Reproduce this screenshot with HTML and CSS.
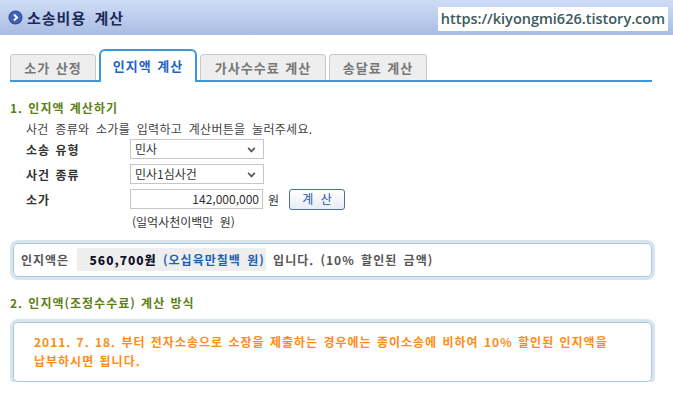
FILE: index.html
```html
<!DOCTYPE html>
<html lang="ko">
<head>
    <meta charset="UTF-8">
    <title>소송비용 계산</title>
    <link rel="stylesheet" href="styles.css">
</head>
<body>
    <!-- 상단 타이틀 -->
    <div class="top-bar">
        <h1 class="top-title">
            <svg class="top-icon" width="15" height="15" viewBox="0 0 15 15">
                <circle cx="7.5" cy="7.5" r="7" fill="#2a4a9a"/>
                <circle cx="7.5" cy="7.5" r="6" fill="#3f63b8"/>
                <path d="M6 4.5 L9 7.5 L6 10.5" stroke="#fff" stroke-width="2" fill="none"/>
            </svg>
            소송비용 계산
        </h1>
        <div class="site-url">https://kiyongmi626.tistory.com</div>
    </div>

    <div class="content">
        <!-- 탭 -->
        <ul class="tabs">
            <li class="tab">소가 산정</li>
            <li class="tab active">인지액 계산</li>
            <li class="tab">가사수수료 계산</li>
            <li class="tab">송달료 계산</li>
        </ul>

        <h2 class="sec-title">1. 인지액 계산하기</h2>
        <p class="desc">사건 종류와 소가를 입력하고 계산버튼을 눌러주세요.</p>
        <div class="form">
            <div class="row">
                <label class="lbl">소송 유형</label>
                <div class="sel">민사<span class="arrow"></span></div>
            </div>
            <div class="row">
                <label class="lbl">사건 종류</label>
                <div class="sel">민사1심사건<span class="arrow"></span></div>
            </div>
            <div class="row">
                <label class="lbl">소가</label>
                <div class="num">142,000,000</div>
                <span class="unit">원</span>
                <button class="btn">계 산</button>
            </div>
            <div class="hangul">(일억사천이백만 원)</div>
        </div>

        <div class="box result">
            인지액은
            <span class="amount"><b class="won">560,700원</b> <span class="kor">(오십육만칠백 원)</span></span>
            입니다. (10% 할인된 금액)
        </div>

        <h2 class="sec-title sec2">2. 인지액(조정수수료) 계산 방식</h2>
        <div class="box notice">
            2011. 7. 18. 부터 전자소송으로 소장을 제출하는 경우에는 종이소송에 비하여 10% 할인된 인지액을<br>
            납부하시면 됩니다.
        </div>
    </div>
</body>
</html>
```

FILE: styles.css
```css
body {
    margin: 0;
    font-family: "Noto Sans CJK KR", "Liberation Sans", sans-serif;
    font-size: 12px;
    color: #444;
    background: #fff;
    word-spacing: 3px;
}
/* 상단 타이틀 */
.top-bar {
    height: 35px;
    background: linear-gradient(#cfdcf6, #a9bde2);
    display: flex;
    align-items: center;
    justify-content: space-between;
    padding: 0 5px 0 8px;
}
.top-title {
    margin: 0;
    font-size: 15px;
    font-weight: bold;
    color: #1c2a58;
    display: flex;
    align-items: center;
    gap: 4px;
    letter-spacing: 1px;
}
.top-icon {
    display: block;
}
.site-url {
    background: #fff;
    color: #3b5a5e;
    font-family: "Open Sans", "Liberation Sans", sans-serif;
    font-size: 14.5px;
    font-weight: 600;
    padding: 2px 3px 2px 3px;
    line-height: 20px;
    margin-top: 2px;
    word-spacing: 0;
}
.content {
    padding: 0 21px 0 10px;
}
/* 탭 */
.tabs {
    list-style: none;
    margin: 14px 0 0;
    padding: 0;
    display: flex;
    gap: 3px;
    border-bottom: 2px solid #3b97dd;
    height: 31px;
    align-items: flex-end;
}
.tab {
    height: 25px;
    line-height: 25px;
    background: #eeeeee;
    border: 1px solid #c9c9c9;
    border-bottom: none;
    border-radius: 4px 4px 0 0;
    color: #777;
    font-weight: bold;
    font-size: 13px;
    letter-spacing: 1px;
    word-spacing: 1px;
    text-align: center;
    width: 84px;
}
.tab:nth-child(3) { width: 124px; }
.tab:nth-child(4) { width: 96px; }
.tab.active {
    width: 94px;
    line-height: 30px;
    background: #fff;
    border: 2px solid #3b97dd;
    border-bottom: none;
    border-radius: 6px 6px 0 0;
    color: #1d63c8;
    margin-bottom: -2px;
    height: 31px;
}
/* 섹션 제목 */
.sec-title {
    margin: 17px 0 0;
    font-size: 12px;
    font-weight: bold;
    color: #5d7f16;
    line-height: 18px;
    letter-spacing: 1px;
    word-spacing: 1px;
}
.desc {
    margin: 3px 0 0 16px;
    line-height: 18px;
    color: #444;
    letter-spacing: 0.3px;
}
.form {
    margin-left: 16px;
}
.row {
    display: flex;
    align-items: center;
    height: 20px;
    margin-top: 5px;
}
.row:first-child {
    margin-top: 1px;
}
.lbl {
    width: 104px;
    font-weight: bold;
    color: #333;
    letter-spacing: 1px;
    word-spacing: 1px;
}
.sel, .num {
    height: 18px;
    border: 1px solid #c6c6c6;
    line-height: 18px;
    padding: 0 0 0 4px;
    color: #333;
    position: relative;
    width: 128px;
}
.num {
    text-align: right;
    padding: 0 3px 0 0;
}
.arrow {
    position: absolute;
    right: 8px;
    top: 5px;
    width: 5px;
    height: 5px;
    border-right: 2px solid #555;
    border-bottom: 2px solid #555;
    transform: rotate(45deg) scale(0.8);
}
.unit {
    margin-left: 5px;
    color: #333;
}
.btn {
    margin-left: 10px;
    width: 56px;
    height: 21px;
    border: 1px solid #4d6e9a;
    border-radius: 3px;
    background: linear-gradient(#fff, #e8edf3);
    color: #1d58b0;
    font-family: inherit;
    font-size: 12px;
    padding: 0;
    line-height: 18px;
    word-spacing: 4px;
}
.hangul {
    margin: 4px 0 0 106px;
    line-height: 18px;
    color: #333;
}
/* 결과 박스 */
.box {
    border: 1px solid #a7c6df;
    box-shadow: 0 0 0 3px #d8e4ee;
    border-radius: 5px;
    margin-left: 3px;
}
.result {
    margin-top: 12px;
    height: 32px;
    line-height: 32px;
    padding: 0 7px;
    font-weight: bold;
    color: #555;
    letter-spacing: 1px;
    word-spacing: 2px;
}
.amount {
    background: #eeeeee;
    padding: 3px 1px 3px 13px;
    margin: 0 1px;
}
.won {
    color: #10102a;
}
.kor {
    color: #1f5fb1;
}
.sec2 {
    margin-top: 17px;
}
.notice {
    margin-top: 10px;
    padding: 9px 8px 9px 20px;
    height: 40px;
    line-height: 19px;
    color: #ff8c14;
    font-weight: bold;
    letter-spacing: 1px;
    word-spacing: 1px;
}
```
